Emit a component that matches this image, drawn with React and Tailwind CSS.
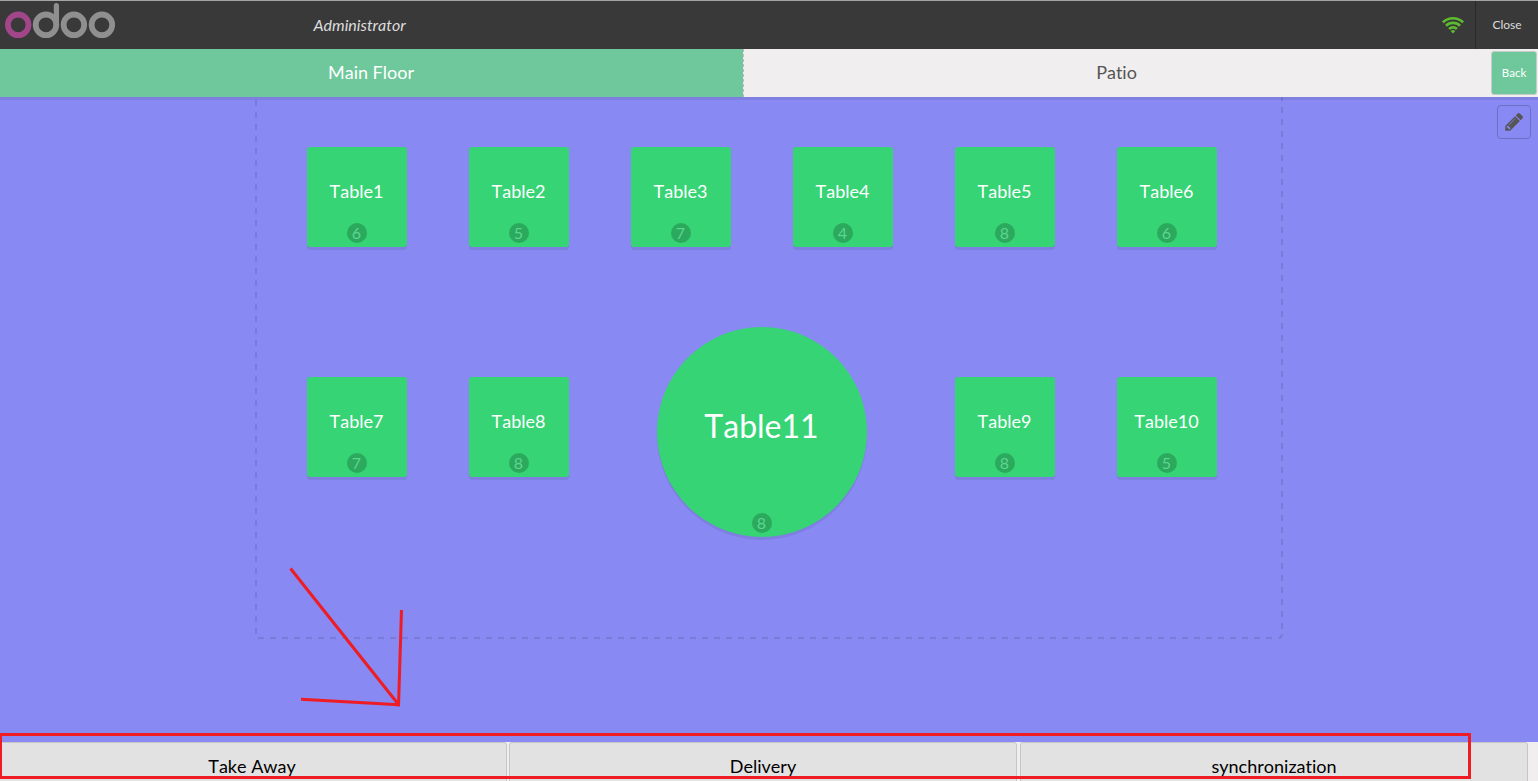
const tables = [
  { name: 'Table1', seats: 6, place: 'left-[307px] top-[50px]' },
  { name: 'Table2', seats: 5, place: 'left-[469px] top-[50px]' },
  { name: 'Table3', seats: 7, place: 'left-[631px] top-[50px]' },
  { name: 'Table4', seats: 4, place: 'left-[793px] top-[50px]' },
  { name: 'Table5', seats: 8, place: 'left-[955px] top-[50px]' },
  { name: 'Table6', seats: 6, place: 'left-[1117px] top-[50px]' },
  { name: 'Table7', seats: 7, place: 'left-[307px] top-[280px]' },
  { name: 'Table8', seats: 8, place: 'left-[469px] top-[280px]' },
  { name: 'Table9', seats: 8, place: 'left-[955px] top-[280px]' },
  { name: 'Table10', seats: 5, place: 'left-[1117px] top-[280px]' },
  { name: 'Table11', seats: 8, place: 'left-[657px] top-[230px]', round: true },
];

function Logo() {
  return (
    <svg className="ml-[4px] mt-[2px] h-[38px] w-[113px]" viewBox="4 3 113 38" fill="none" strokeWidth="5.8">
      <g stroke="#8f8f8f">
        <circle cx="46" cy="24.8" r="10.3" />
        <circle cx="73.9" cy="24.8" r="10.3" />
        <circle cx="101.9" cy="24.8" r="10.3" />
        <path d="M56.4 25V5.7" strokeWidth="5.2" strokeLinecap="round" />
      </g>
      <circle cx="18.2" cy="24.8" r="10.3" stroke="#a24689" />
    </svg>
  );
}

function Wifi() {
  return (
    <svg className="h-[18px] w-[24px]" viewBox="0 0 24 18" fill="none" stroke="#5dbb2f" strokeWidth="2.7">
      <path d="M1.9 6.4a14.4 14.4 0 0 1 20.2 0" />
      <path d="M5 9.8a10 10 0 0 1 14 0" />
      <path d="M8.1 13a5.5 5.5 0 0 1 7.8 0" />
      <path d="M12 17.4l-2.2-2.2a3 3 0 0 1 4.4 0z" fill="#5dbb2f" stroke="none" />
    </svg>
  );
}

function Pencil() {
  return (
    <svg className="h-[21px] w-[21px]" viewBox="20 60 1792 1792" fill="#555">
      <path d="M491 1536l91-91-235-235-91 91v107h128v128h107zm523-928q0-22-22-22-10 0-17 7l-542 542q-7 7-7 17 0 22 22 22 10 0 17-7l542-542q7-7 7-17zm-54-192l416 416-832 832h-416v-416zm683 96q0 53-37 90l-166 166-416-416 166-165q36-38 90-38 53 0 91 38l235 234q37 39 37 91z" />
    </svg>
  );
}

function Table({ name, seats, place, round }) {
  const shape = round
    ? 'h-[210px] w-[210px] rounded-full text-[32px] leading-[198px]'
    : 'h-[100px] w-[100px] rounded-[3px] text-[18px] leading-[88px]';
  return (
    <div className={`absolute bg-[#36d475] text-center text-white shadow-[0_3px_0_rgba(0,0,0,0.07)] ${shape} ${place}`}>
      <span className="block pr-px">{name}</span>
      <span className="absolute bottom-[4px] left-1/2 -ml-[10px] h-5 w-5 rounded-full bg-black/20 pr-px text-[16px] leading-[20px] text-[#5ed590]">
        {seats}
      </span>
    </div>
  );
}

export default function App() {
  return (
    <div className="relative flex h-[781px] w-[1538px] flex-col overflow-hidden bg-[#f0eeee] font-['Lato',sans-serif] [font-kerning:none] [font-variant-ligatures:none]">
      <header className="flex h-[49px] shrink-0 border-t border-[#a5a5a5] bg-[#393939] text-[#ddd]">
        <Logo />
        <div className="ml-[196.5px] text-[16px] leading-[48px] italic">Administrator</div>
        <div className="ml-auto flex">
          <div className="flex w-[34px] items-center pb-px">
            <Wifi />
          </div>
          <div className="w-[63px] border-l border-[#292929] text-center text-[12px] leading-[48px]">Close</div>
        </div>
      </header>

      <nav className="flex h-12 shrink-0 text-[18px] leading-[46px]">
        <div className="w-[743px] bg-[#6ec89b] pr-px text-center text-white">Main Floor</div>
        <div className="flex-1 border-l border-dashed border-[#bbb] pr-[2px] text-center text-[#555]">Patio</div>
        <button className="mt-[2px] mr-px h-[44px] w-[46px] rounded-[3px] border border-[#c3cdc8] bg-[#6ec89b] text-[11.5px] leading-[42px] text-white">
          Back
        </button>
      </nav>

      <main className="relative h-[645px] shrink-0 overflow-hidden bg-[#8889f2]">
        <svg
          className="absolute top-0 left-[255px] h-[542px] w-[1028px]"
          fill="none"
          stroke="#000"
          strokeOpacity="0.1"
          strokeWidth="2"
          strokeDasharray="6 6"
        >
          <path d="M1 3V539" />
          <path d="M1027 -2V538" />
          <path d="M3 541H1020" />
          <path d="M1023.5 541q3 -.5 3.5 -3.5" strokeDasharray="none" />
        </svg>
        {tables.map((t) => (
          <Table key={t.name} {...t} />
        ))}
        <div className="absolute inset-x-0 top-0 h-[3px] bg-black/7" />
        <button className="absolute top-[8px] right-[7px] flex h-[34px] w-[34px] items-center justify-center rounded-[4px] border border-[#6e6fc4]">
          <Pencil />
        </button>
      </main>

      <footer className="flex flex-1 gap-[2px] text-[18px] leading-[47px] text-black">
        <div className="-ml-[3px] h-[50px] w-[510px] rounded-[3px] border border-[#c6c6c6] bg-[#e2e2e2] text-center">Take Away</div>
        <div className="h-[50px] w-[508px] rounded-[3px] border border-[#c6c6c6] bg-[#e2e2e2] text-center">Delivery</div>
        <div className="ml-px h-[50px] w-[508px] rounded-[3px] border border-[#c6c6c6] bg-[#e2e2e2] text-center">synchronization</div>
      </footer>

      <svg className="pointer-events-none absolute inset-0" width="1538" height="781" fill="none" stroke="#ef1c24" strokeWidth="3">
        <path d="M0.5 734.5H1469.5V777.5H0.5Z" />
        <path d="M290.5 568.5L398.5 704.5M401.5 610L398.5 706.5M301 699.3L399 704.7" />
      </svg>
    </div>
  );
}
